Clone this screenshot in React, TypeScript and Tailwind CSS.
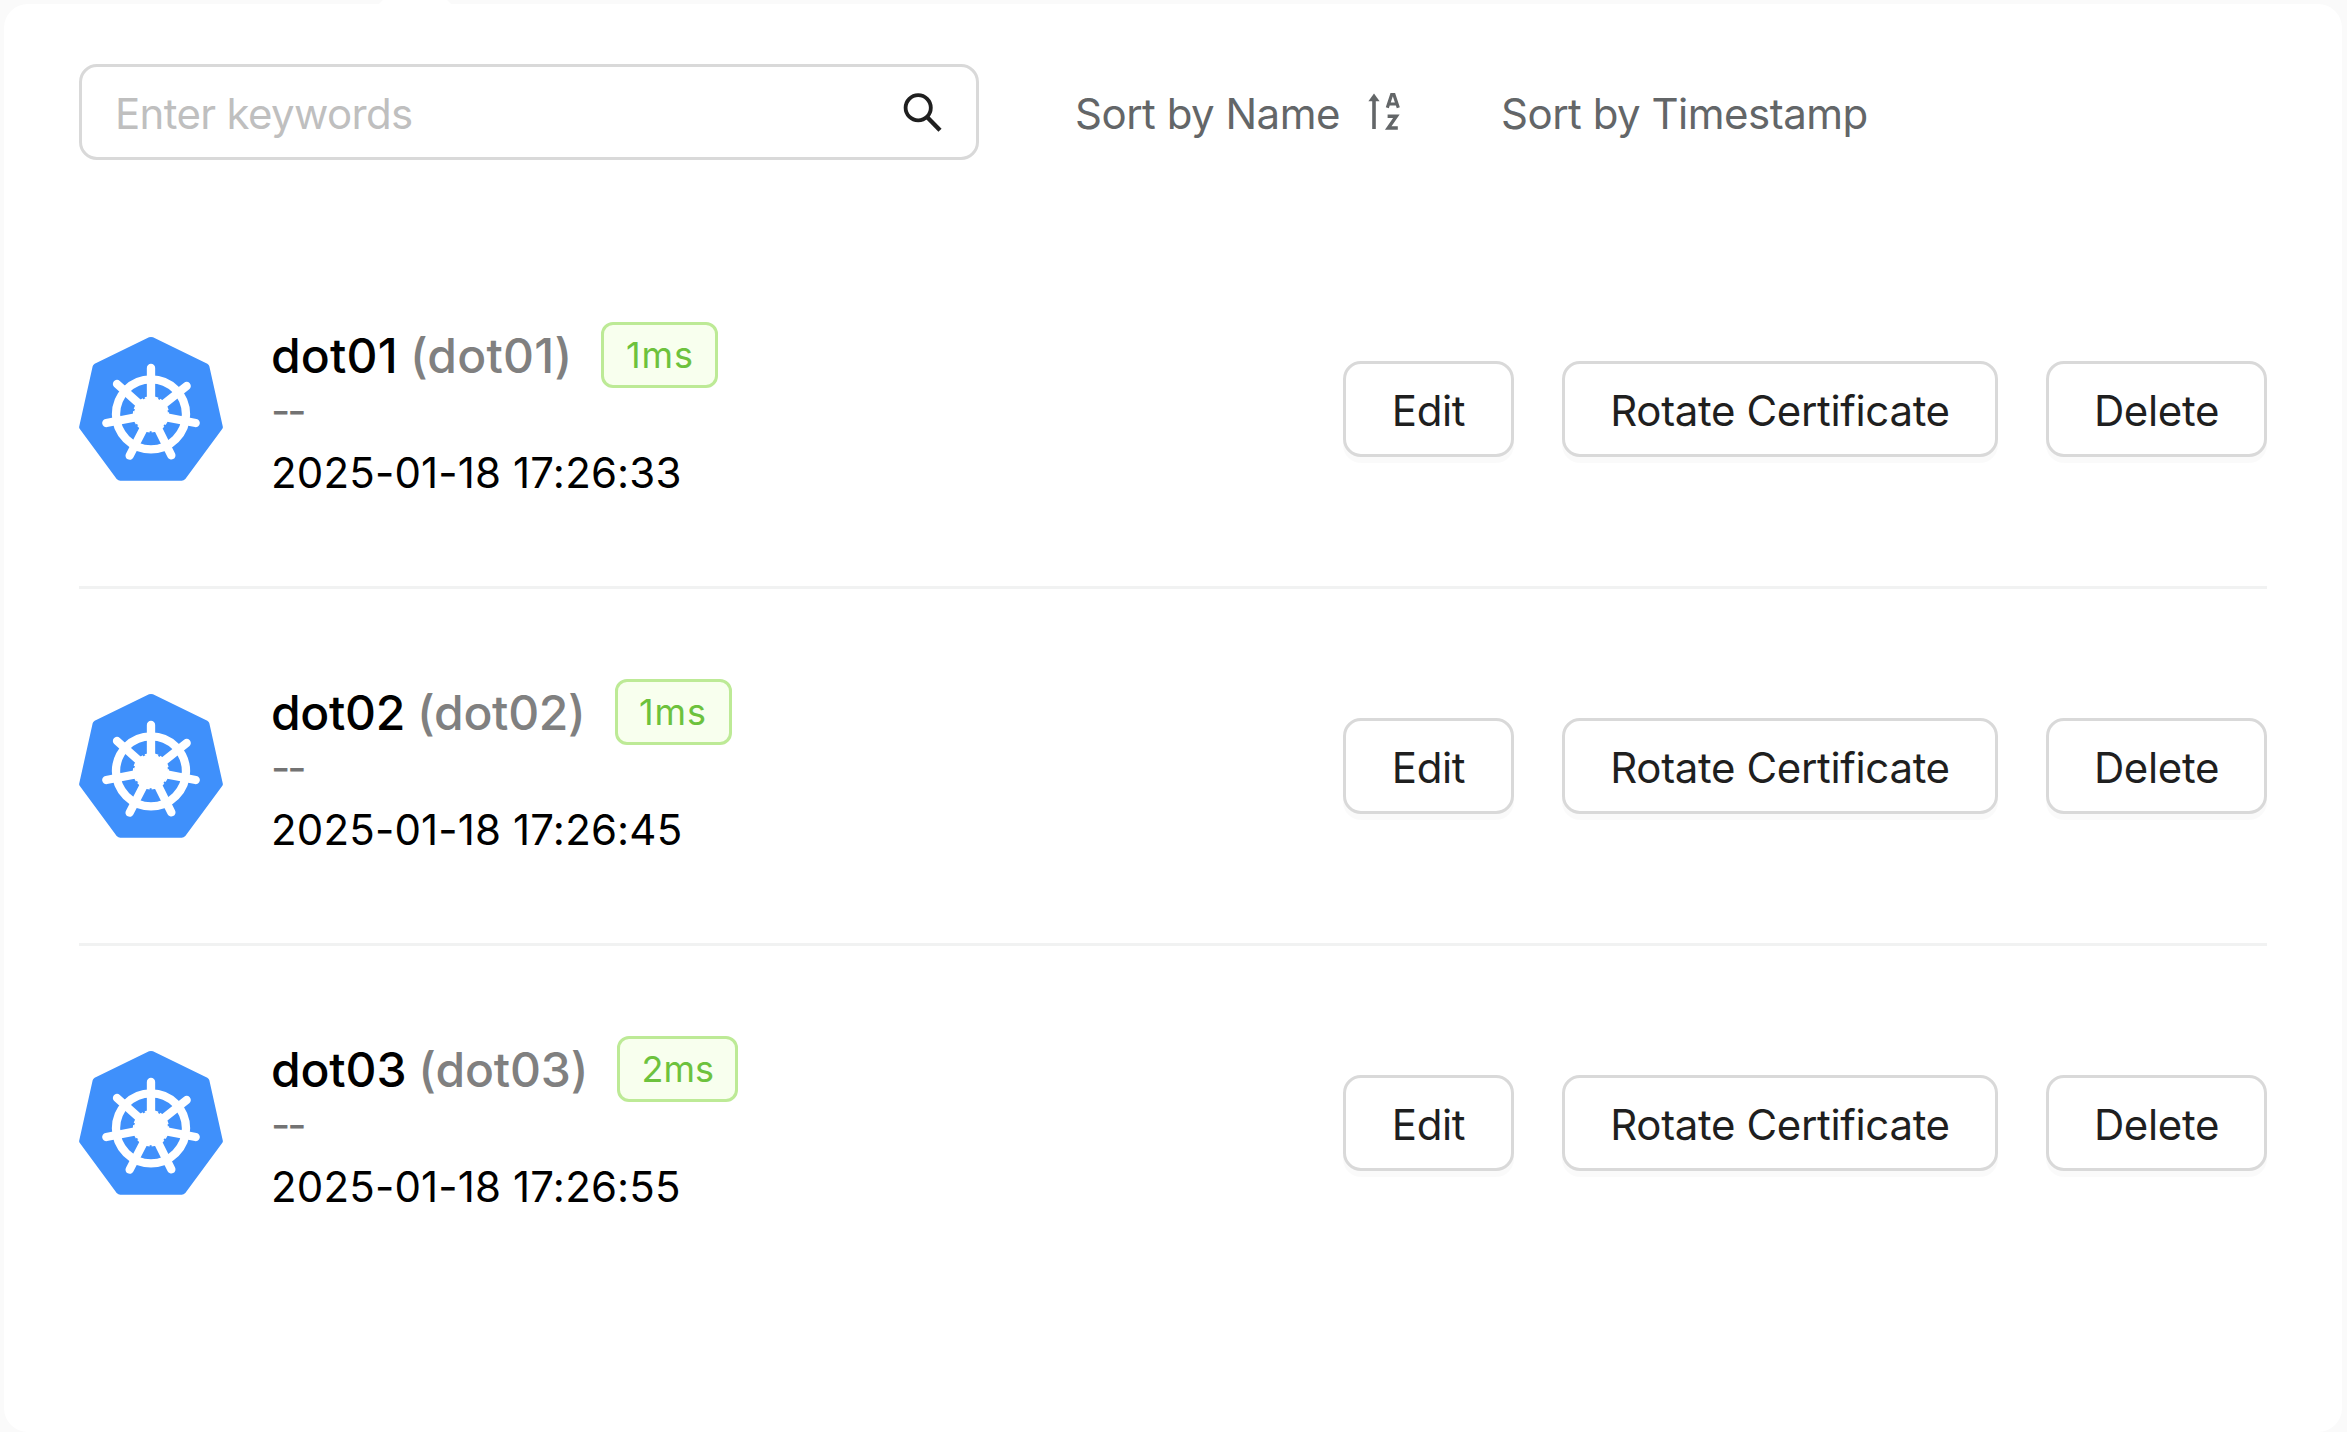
const clusters = [
  { name: 'dot01', latency: '1ms', time: '2025-01-18 17:26:33', title: 'tracking-[0.2px]', tag: 'w-[117px] tracking-[0.9px]' },
  { name: 'dot02', latency: '1ms', time: '2025-01-18 17:26:45', title: 'tracking-[-0.3px]', tag: 'w-[117px] tracking-[0.9px]' },
  { name: 'dot03', latency: '2ms', time: '2025-01-18 17:26:55', title: 'tracking-[-0.15px]', tag: 'w-[121px]' },
];

function KubernetesLogo() {
  return (
    <svg viewBox="0 0 432 432" className="h-36 w-36 shrink-0">
      <path
        d="M210 1Q216 -1 222 1L385 80Q390 83 391 88L431 267Q433 273 429 277L319 426Q314 431 308 431L124 431Q118 431 113 426L3 277Q-1 273 1 267L41 88Q42 83 47 80Z"
        fill="#3f90fb"
      />
      <g stroke="#fff" strokeWidth="25" strokeLinecap="round" fill="none">
        <circle cx="216" cy="232" r="105" />
        <path d="M216 232V93M216 232L114 141M216 232L323 147M216 232L82 258M216 232L350 258M216 232L152 356M216 232L277 355" />
      </g>
      <circle cx="216" cy="232" r="51" fill="#fff" />
      <circle cx="216" cy="232" r="52" fill="none" stroke="#fff" strokeWidth="5" strokeDasharray="17.3 6" strokeDashoffset="8" />
    </svg>
  );
}

function SearchIcon() {
  return (
    <svg viewBox="0 0 42 42" className="h-[42px] w-[42px]" fill="none" stroke="#1f1f1f">
      <circle cx="16.2" cy="16.8" r="12.6" strokeWidth="3.8" />
      <path d="M24.8 25.8L38 39.2" strokeWidth="4.4" />
    </svg>
  );
}

function SortIcon() {
  return (
    <svg viewBox="0 0 32 38" className="h-[38px] w-8" fill="none" stroke="#636668">
      <path d="M6 36V6" strokeWidth="3.6" />
      <path d="M6 0.5L11.6 8.3H0.4Z" fill="#636668" stroke="none" />
      <path d="M19.3 14.8L23.7 1.5H25.9L30.3 14.8M21 11H28.6" strokeWidth="3.2" />
      <path d="M19.6 23.2H28.4L20.2 35H29.8" strokeWidth="3.4" />
    </svg>
  );
}

function Button({ label, className }: { label: string; className: string }) {
  return (
    <button
      className={
        'flex h-24 items-center justify-center rounded-[18px] border-3 border-[#d9d9d9] bg-white pt-0.5 text-[42px] tracking-[-0.35px] text-[#1f1f1f] shadow-[0_6px_0_rgba(0,0,0,0.02)] ' +
        className
      }
    >
      {label}
    </button>
  );
}

export default function App() {
  return (
    <div className="relative h-[1432px] w-[2347px] overflow-hidden bg-[#fafafa] pt-1 pl-1 font-['Inter',sans-serif] whitespace-nowrap">
      <div className="absolute top-0 left-[379px] h-1 w-[72px] bg-white [clip-path:polygon(4px_0,68px_0,100%_100%,0_100%)]" />
      <main className="flex h-[1428px] w-[2338px] flex-col rounded-3xl bg-white pt-[60px] pr-[75px] pl-[75px]">
        <div className="flex h-24 items-center text-[42px] tracking-[-0.5px] text-[#636668]">
          <div className="flex h-24 w-[900px] items-center justify-between rounded-[18px] border-3 border-[#d9d9d9] pr-[32px] pl-[33px] text-[#bfbfbf]">
            <span className="pt-0.5 tracking-[-0.65px]">Enter keywords</span>
            <SearchIcon />
          </div>
          <span className="ml-[96px] w-[293px] pt-0.5">Sort by Name</span>
          <SortIcon />
          <span className="ml-[101px] pt-0.5">Sort by Timestamp</span>
        </div>
        <ul className="mt-[72px]">
          {clusters.map((c) => (
            <li key={c.name} className="flex h-[357px] items-center border-b-3 border-[#f1f2f2] last:border-transparent">
              <KubernetesLogo />
              <div className="mt-[9px] ml-12 flex flex-1 flex-col">
                <div className="flex h-[66px] items-center text-[48px] font-medium text-black">
                  <span className={'pt-0.5 ' + c.title}>{c.name}</span>
                  <span className={'ml-3 pt-0.5 text-[#808080] ' + c.title}>({c.name})</span>
                  <span
                    className={
                      'ml-[29px] flex h-[66px] items-center justify-center rounded-xl border-3 border-[#bdea96] bg-[#f8ffee] text-[36px] font-normal text-[#6dc23d] ' +
                      c.tag
                    }
                  >
                    {c.latency}
                  </span>
                </div>
                <span className="flex h-[42px] items-center pt-0.5 text-[42px] tracking-[-3px] text-[#737373]">--</span>
                <span className="mt-[9px] flex h-[66px] items-center text-[42px] tracking-[0.16px] text-black">{c.time}</span>
              </div>
              <div className="flex gap-12">
                <Button label="Edit" className="w-[171px]" />
                <Button label="Rotate Certificate" className="w-[436px]" />
                <Button label="Delete" className="w-[221px]" />
              </div>
            </li>
          ))}
        </ul>
      </main>
    </div>
  );
}
